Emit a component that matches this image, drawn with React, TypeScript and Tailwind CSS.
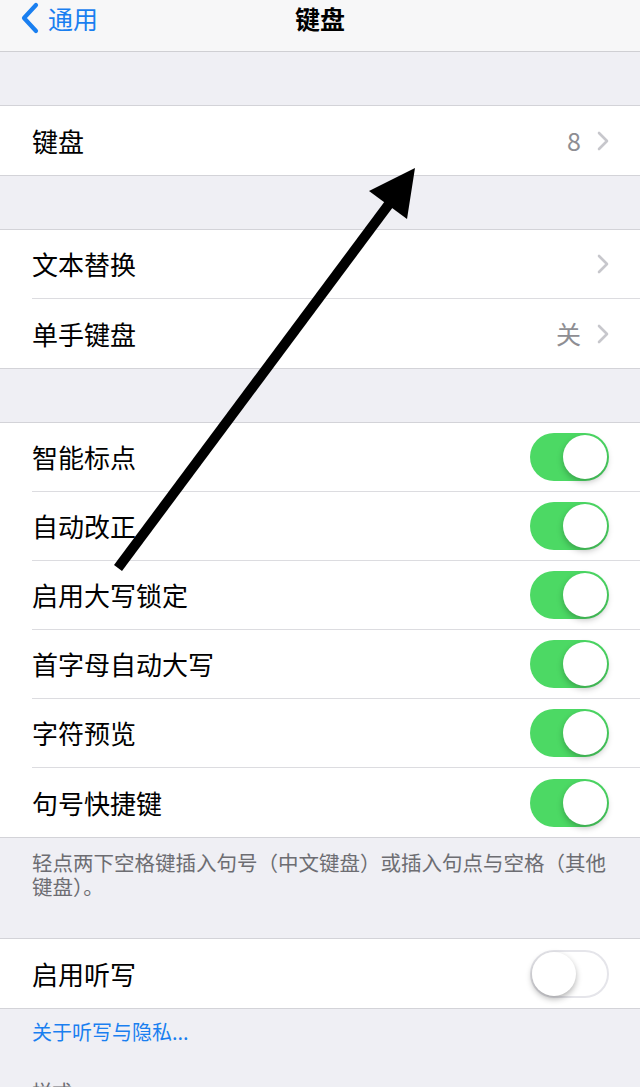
import { ReactNode } from "react";

const font = { fontFamily: '"Noto Sans CJK SC", "Noto Sans", sans-serif' };

const Chevron = () => (
  <svg width="12" height="20" viewBox="0 0 12 20" className="shrink-0">
    <path
      d="M2 2 L10 10 L2 18"
      fill="none"
      stroke="#c7c7cc"
      strokeWidth="2.6"
      strokeLinecap="round"
      strokeLinejoin="round"
    />
  </svg>
);

const Toggle = ({ on }: { on: boolean }) =>
  on ? (
    <div className="relative w-[79px] h-[48px] rounded-full bg-[#4cd964] shrink-0">
      <div className="absolute right-[2px] top-[2px] w-[44px] h-[44px] rounded-full bg-white shadow-[0_3px_6px_rgba(0,0,0,0.25)]" />
    </div>
  ) : (
    <div className="relative w-[79px] h-[48px] rounded-full bg-white border-2 border-[#e5e5ea] shrink-0">
      <div className="absolute left-0 top-0 w-[44px] h-[44px] rounded-full bg-white shadow-[0_3px_6px_rgba(0,0,0,0.3)]" />
    </div>
  );

type RowProps = {
  label: string;
  right?: ReactNode;
  last?: boolean;
};

const Row = ({ label, right, last }: RowProps) => (
  <div className="pl-[32px] bg-white">
    <div
      className={`flex items-center justify-between h-[69px] pr-[31px] ${
        last ? "" : "border-b border-[#dcdce0]"
      }`}
    >
      <span className="text-[26px] text-black leading-none">{label}</span>
      {right}
    </div>
  </div>
);

const Value = ({ text }: { text?: string }) => (
  <div className="flex items-center gap-[16px]">
    {text && <span className="text-[25px] text-[#8e8e93] leading-none">{text}</span>}
    <Chevron />
  </div>
);

const Group = ({ children }: { children: ReactNode }) => (
  <div className="border-y border-[#d3d3d8] bg-white">{children}</div>
);

export default function App() {
  return (
    <div className="relative w-[640px] h-[1087px] overflow-hidden bg-[#efeff4]" style={font}>
      {/* nav bar */}
      <div className="h-[52px] bg-[#f7f7f8] border-b border-[#cfcfd3]">
        <div className="grid grid-cols-3 items-center h-[36px]">
          <div className="flex items-center gap-[8px] pl-[20px] text-[#1a7ff0]">
            <svg width="20" height="32" viewBox="0 0 20 32">
              <path
                d="M16 3 L4 16 L16 29"
                fill="none"
                stroke="currentColor"
                strokeWidth="4.2"
                strokeLinecap="round"
                strokeLinejoin="round"
              />
            </svg>
            <span className="text-[25px] leading-[30px]">通用</span>
          </div>
          <div className="text-center text-[25px] font-bold text-black leading-[30px]">键盘</div>
          <div />
        </div>
      </div>

      <div className="h-[53px]" />
      <Group>
        <Row label="键盘" right={<Value text="8" />} last />
      </Group>

      <div className="h-[53px]" />
      <Group>
        <Row label="文本替换" right={<Value />} />
        <Row label="单手键盘" right={<Value text="关" />} last />
      </Group>

      <div className="h-[53px]" />
      <Group>
        <Row label="智能标点" right={<Toggle on />} />
        <Row label="自动改正" right={<Toggle on />} />
        <Row label="启用大写锁定" right={<Toggle on />} />
        <Row label="首字母自动大写" right={<Toggle on />} />
        <Row label="字符预览" right={<Toggle on />} />
        <Row label="句号快捷键" right={<Toggle on />} last />
      </Group>

      <div className="h-[100px] px-[32px] pt-[12px]">
        <p className="text-[20.5px] leading-[24px] text-[#6d6d72]">
          轻点两下空格键插入句号（中文键盘）或插入句点与空格（其他键盘）。
        </p>
      </div>

      <Group>
        <Row label="启用听写" right={<Toggle on={false} />} last />
      </Group>

      <div className="px-[32px] pt-[11px]">
        <p className="text-[20px] leading-[24px] text-[#1a7ff0]">关于听写与隐私...</p>
        <p className="mt-[36px] text-[20px] leading-[24px] text-[#6d6d72]">样式</p>
      </div>

      {/* annotation arrow */}
      <svg
        className="absolute left-0 top-0 pointer-events-none"
        width="640"
        height="1087"
        viewBox="0 0 640 1087"
      >
        <line x1="118" y1="568" x2="392" y2="200" stroke="#000" strokeWidth="10" />
        <polygon points="415,168 369,191 407,219" fill="#000" />
      </svg>
    </div>
  );
}
